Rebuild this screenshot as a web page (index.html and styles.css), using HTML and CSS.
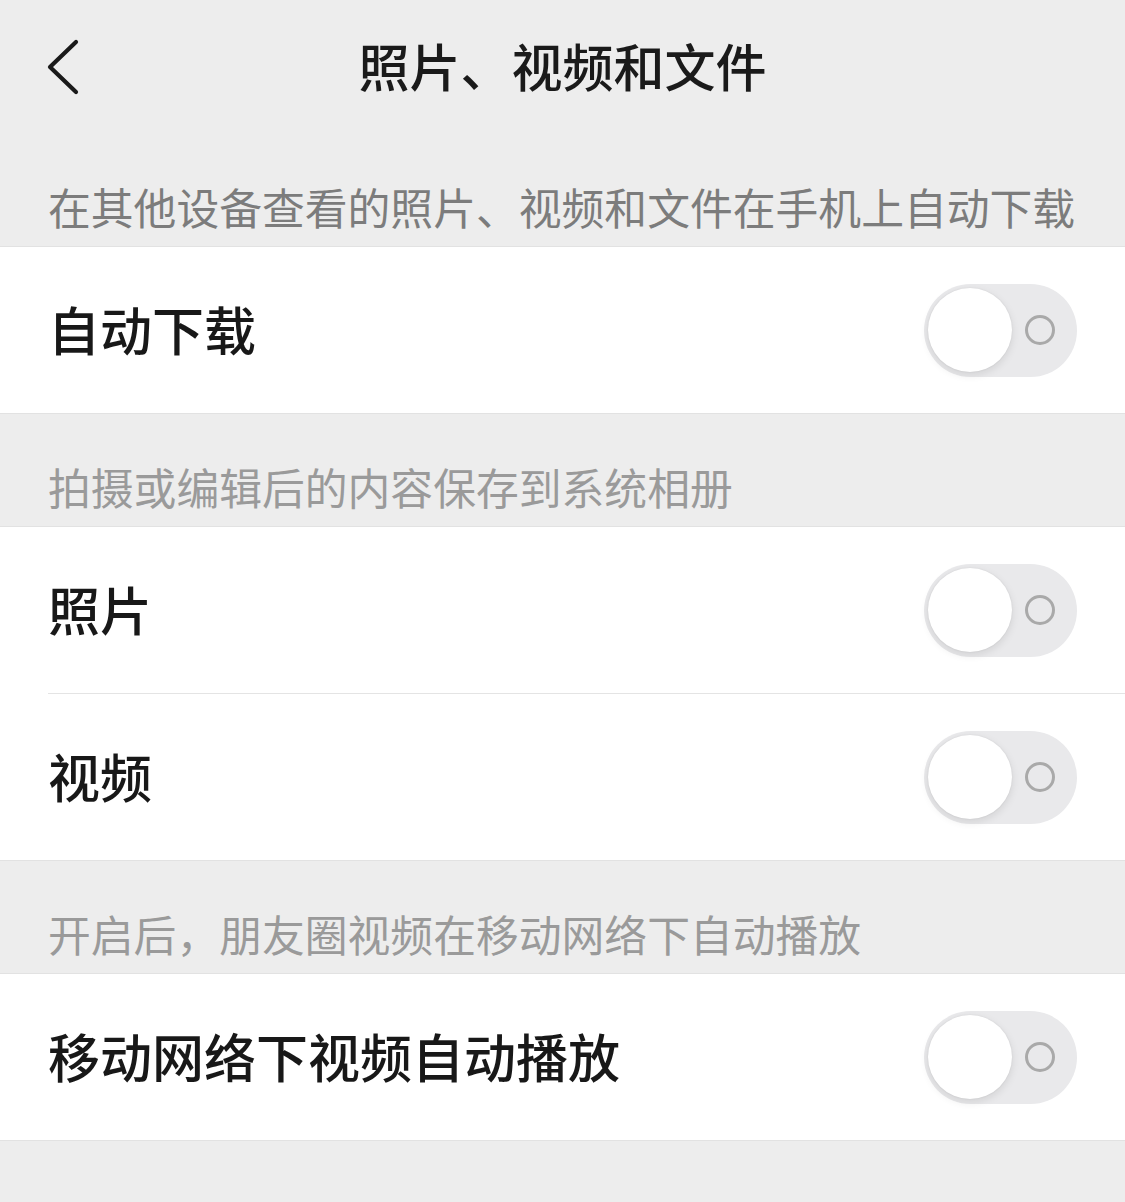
FILE: index.html
```html
<!DOCTYPE html>
<html lang="zh-CN">
<head>
<meta charset="utf-8">
<title>照片、视频和文件</title>
<link rel="stylesheet" href="styles.css">
</head>
<body>
<div class="page">
  <header class="nav">
    <div class="nav-left">
      <svg class="back" width="40" height="60" viewBox="0 0 40 60">
        <polyline points="30,6 4,31 30,56" fill="none" stroke="#1a1a1a" stroke-width="4.2" stroke-linecap="round" stroke-linejoin="round"/>
      </svg>
    </div>
    <h1 class="title">照片、视频和文件</h1>
    <div class="nav-right"></div>
  </header>

  <div class="section-label dark">在其他设备查看的照片、视频和文件在手机上自动下载</div>
  <div class="group">
    <div class="row">
      <span class="row-text">自动下载</span>
      <span class="switch"><span class="knob"></span><span class="ring"></span></span>
    </div>
  </div>

  <div class="section-label">拍摄或编辑后的内容保存到系统相册</div>
  <div class="group">
    <div class="row">
      <span class="row-text">照片</span>
      <span class="switch"><span class="knob"></span><span class="ring"></span></span>
    </div>
    <div class="divider"></div>
    <div class="row">
      <span class="row-text">视频</span>
      <span class="switch"><span class="knob"></span><span class="ring"></span></span>
    </div>
  </div>

  <div class="section-label">开启后，朋友圈视频在移动网络下自动播放</div>
  <div class="group">
    <div class="row">
      <span class="row-text">移动网络下视频自动播放</span>
      <span class="switch"><span class="knob"></span><span class="ring"></span></span>
    </div>
  </div>
</div>
</body>
</html>
```

FILE: styles.css
```css
html, body {
  margin: 0;
  padding: 0;
  background: #ededed;
}
body {
  font-family: "Noto Sans CJK SC", "Noto Sans", sans-serif;
  color: #181818;
}
.page {
  width: 1125px;
  min-height: 1202px;
  background: #ededed;
}
.nav {
  height: 134px;
  box-sizing: border-box;
  padding-bottom: 4px;
  display: grid;
  grid-template-columns: 1fr auto 1fr;
  align-items: center;
}
.nav-left {
  display: flex;
  align-items: center;
  padding-left: 46px;
}
.back {
  display: block;
  margin-top: 2px;
}
.title {
  margin: 0;
  font-size: 51px;
  font-weight: 500;
  line-height: 60px;
  color: #1a1a1a;
}
.section-label {
  height: 112px;
  box-sizing: border-box;
  display: flex;
  align-items: flex-end;
  padding: 0 0 15px 48px;
  font-size: 42.8px;
  line-height: 50px;
  color: #9a9a9a;
}
.section-label.dark {
  color: #7c7c7c;
}
.group {
  background: #ffffff;
  border-top: 1px solid #e2e2e2;
  border-bottom: 1px solid #e2e2e2;
}
.row {
  height: 166px;
  box-sizing: border-box;
  padding: 0 48px 3px 48px;
  display: flex;
  align-items: center;
  justify-content: space-between;
}
.row-text {
  font-size: 52px;
  font-weight: 500;
  line-height: 60px;
  color: #181818;
}
.switch {
  width: 153px;
  height: 93px;
  box-sizing: border-box;
  border-radius: 47px;
  background: #e9e9eb;
  display: flex;
  align-items: center;
  padding-left: 4px;
  gap: 13px;
  margin-top: 3px;
}
.divider {
  height: 1px;
  margin-left: 48px;
  background: #e4e4e4;
}
.knob {
  width: 84px;
  height: 84px;
  border-radius: 50%;
  background: #ffffff;
  box-shadow: 0 3px 8px rgba(0, 0, 0, 0.1), 0 0 2px rgba(0, 0, 0, 0.08);
}
.ring {
  width: 30px;
  height: 30px;
  box-sizing: border-box;
  border-radius: 50%;
  border: 3px solid #a9a9a9;
}
```
